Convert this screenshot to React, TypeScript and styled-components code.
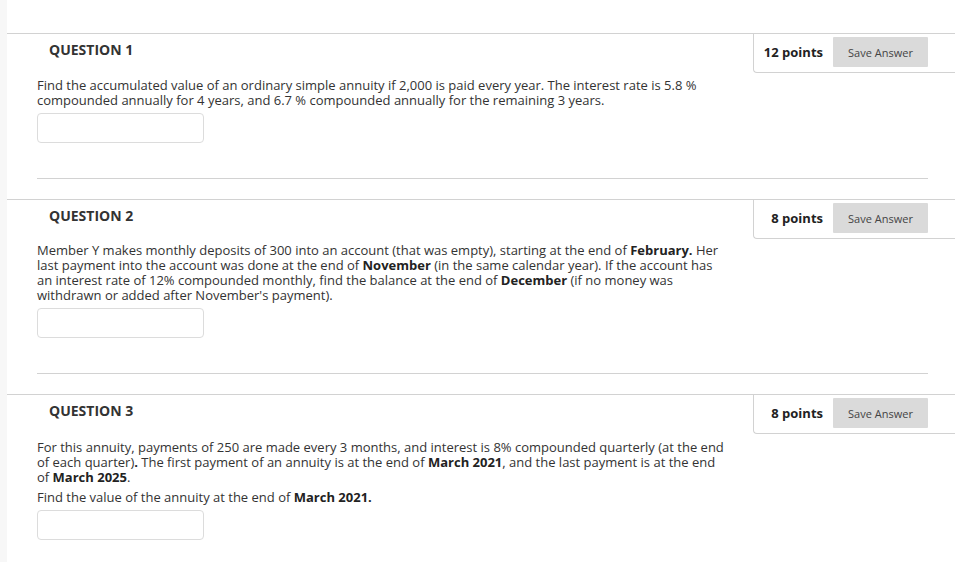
import React from "react";
import styled, { createGlobalStyle } from "styled-components";

const Global = createGlobalStyle`
  html, body {
    margin: 0;
    padding: 0;
    background: #f7f7f7;
  }
  body {
    font-family: "Open Sans", "Liberation Sans", sans-serif;
    color: #333;
  }
`;

// Basic
const Page = styled.div`
  margin-left: 7px;
  min-height: 562px;
  background: #fff;
  padding-top: 33px;
  box-sizing: border-box;
`;
const Question = styled.section`
  margin-bottom: 20px;
`;
const Header = styled.div`
  display: flex;
  justify-content: space-between;
  align-items: stretch;
  border-top: 1px solid #d2d2d2;
`;
const Title = styled.h3`
  margin: 0;
  padding: 7px 0 0 42px;
  font-size: 14px;
  line-height: 18px;
  font-weight: 700;
  color: #333;
`;
const PointsBox = styled.div`
  width: 202px;
  height: 39px;
  box-sizing: border-box;
  display: flex;
  align-items: center;
  justify-content: flex-end;
  gap: 10px;
  padding: 0 27px 2px 0;
  border-left: 1px solid #d2d2d2;
  border-bottom: 1px solid #d2d2d2;
  border-bottom-left-radius: 4px;
`;
const Points = styled.span`
  font-size: 13px;
  font-weight: 700;
  color: #222;
  margin-top: -1px;
`;
const SaveButton = styled.button`
  width: 95px;
  height: 30px;
  border: none;
  border-radius: 1px;
  background: #dadada;
  color: #444;
  font-family: inherit;
  font-size: 11px;
  padding: 0;
  cursor: pointer;
`;
const Body = styled.div<{ "data-top": number }>`
  padding: ${(props) => props["data-top"]}px 0 0 30px;
`;
const Text = styled.p`
  margin: 0 0 5px;
  width: 690px;
  font-size: 13px;
  line-height: 15px;
  color: #333;
  & b {
    font-weight: 700;
    color: #222;
  }
`;
const Answer = styled.input`
  display: block;
  width: 167px;
  height: 30px;
  box-sizing: border-box;
  margin-top: 0;
  border: 1px solid #dcdcdc;
  border-radius: 4px;
  background: #fff;
`;
const Divider = styled.hr`
  margin: 35px 27px 0 30px;
  border: none;
  border-top: 1px solid #d2d2d2;
  height: 0;
`;

type Q = { n: number; points: number; top: number; paras: React.ReactNode[] };

const questions: Q[] = [
  {
    n: 1,
    points: 12,
    top: 5,
    paras: [
      <>
        Find the accumulated value of an ordinary simple annuity if 2,000 is paid every
        year. The interest rate is 5.8 % compounded annually for 4 years, and 6.7 %
        compounded annually for the remaining 3 years.
      </>,
    ],
  },
  {
    n: 2,
    points: 8,
    top: 4,
    paras: [
      <>
        Member Y makes monthly deposits of 300 into an account (that was empty), starting
        at the end of <b>February.</b> Her last payment into the account was done at the
        end of <b>November</b> (in the same calendar year). If the account has an
        interest rate of 12% compounded monthly, find the balance at the end of{" "}
        <b>December</b> (if no money was withdrawn or added after November's payment).
      </>,
    ],
  },
  {
    n: 3,
    points: 8,
    top: 6,
    paras: [
      <>
        For this annuity, payments of 250 are made every 3 months, and interest is 8%
        compounded quarterly (at the end of each quarter)<b>.</b> The first payment of an
        annuity is at the end of <b>March 2021</b>, and the last payment is at the end
        of <b>March 2025</b>.
      </>,
      <>
        Find the value of the annuity at the end of <b>March 2021.</b>
      </>,
    ],
  },
];

const App = () => {
  let list = [];
  for (let q of questions) {
    list.push(
      <Question key={q.n}>
        <Header>
          <Title>QUESTION {q.n}</Title>
          <PointsBox>
            <Points>{q.points} points</Points>
            <SaveButton>Save Answer</SaveButton>
          </PointsBox>
        </Header>
        <Body data-top={q.top}>
          {q.paras.map((p, i) => (
            <Text key={i}>{p}</Text>
          ))}
          <Answer type="text" />
        </Body>
        {q.n < 3 && <Divider />}
      </Question>
    );
  }
  return (
    <Page>
      <Global />
      {list}
    </Page>
  );
};

export default App;
